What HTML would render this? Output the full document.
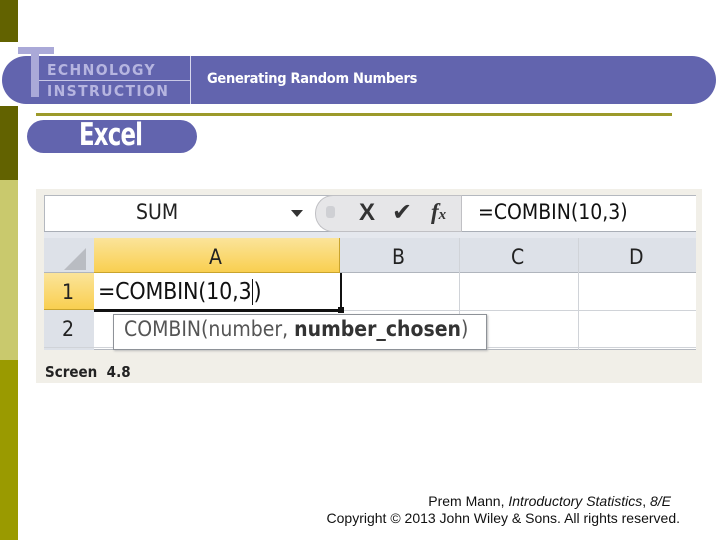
<!DOCTYPE html>
<html><head><meta charset="utf-8"><style>
*{margin:0;padding:0;box-sizing:border-box}
body{width:720px;height:540px;position:relative;background:#fff;overflow:hidden;font-family:"Liberation Sans",sans-serif}
.a{position:absolute}
.cal{font-family:"DejaVu Sans Condensed","DejaVu Sans","Liberation Sans",sans-serif}
</style></head><body>
<div class="a" style="left:0;top:0;width:18px;height:42px;background:#626200"></div>
<div class="a" style="left:0;top:106px;width:18px;height:74px;background:#626200"></div>
<div class="a" style="left:0;top:180px;width:18px;height:180px;background:#c9c96d"></div>
<div class="a" style="left:0;top:360px;width:18px;height:180px;background:#9a9a00"></div>

<div class="a" style="left:2px;top:56px;width:714px;height:48px;background:#6264ae;border-radius:24px"></div>
<div class="a" style="left:18px;top:47px;width:36px;height:7px;background:#aaa9d8"></div>
<div class="a" style="left:31px;top:47px;width:8px;height:50px;background:#aaa9d8"></div>
<div class="a" style="left:39px;top:80px;width:152px;height:1px;background:#c8c8e6"></div>
<div class="a" style="left:190px;top:56px;width:1px;height:48px;background:#d8d8ee"></div>
<div class="a cal" style="left:47px;top:61px;font-size:15.5px;font-weight:bold;letter-spacing:1.4px;color:#b6b5e0">ECHNOLOGY</div>
<div class="a cal" style="left:47px;top:82px;font-size:15.5px;font-weight:bold;letter-spacing:1.4px;color:#b6b5e0">INSTRUCTION</div>
<div class="a cal" style="left:207px;top:71px;font-size:14.5px;font-weight:bold;color:#fff;letter-spacing:-0.3px">Generating Random Numbers</div>

<div class="a" style="left:36px;top:113px;width:636px;height:3px;background:#9c9a2a"></div>
<div class="a" style="left:27px;top:120px;width:170px;height:33px;background:#6264ae;border-radius:17px"></div>
<div class="a cal" style="left:79px;top:117px;font-size:31px;font-weight:bold;color:#fff;letter-spacing:-1px;transform:scaleX(.82);transform-origin:left">Excel</div>

<div class="a" style="left:36px;top:189px;width:666px;height:194px;background:#f1efe8"></div>
<div class="a" style="left:44px;top:195px;width:652px;height:155px;background:#fff;border:1px solid #b4b8bf;border-right:none"></div>
<div class="a" style="left:44px;top:231px;width:652px;height:7px;background:#e5e8ee;border-top:1px solid #a9aeb6"></div>
<div class="a cal" style="left:136px;top:200px;font-size:21px;color:#222">SUM</div>
<div class="a" style="left:291px;top:210px;border-left:6px solid transparent;border-right:6px solid transparent;border-top:7px solid #333"></div>
<div class="a" style="left:315px;top:195px;width:146px;height:37px;background:#e6e6e8;border-radius:18px 0 0 18px;border:1px solid #c0c0c4;border-right:none"></div>
<div class="a" style="left:326px;top:206px;width:9px;height:12px;background:#cfd0d4;border-radius:3px"></div>
<div class="a" style="left:359px;top:199px;font-size:24px;font-weight:bold;color:#333">X</div>
<div class="a" style="left:392px;top:198px;font-size:24px;color:#333">✔</div>
<div class="a" style="left:431px;top:199px;font-family:'Liberation Serif',serif;font-style:italic;font-weight:bold;font-size:23px;color:#333">f<span style="font-size:15px">x</span></div>
<div class="a" style="left:461px;top:195px;width:1px;height:37px;background:#c0c0c4"></div>
<div class="a cal" style="left:478px;top:200px;font-size:21px;color:#111">=COMBIN(10,3)</div>
<div class="a" style="left:44px;top:238px;width:652px;height:35px;background:#dde1e8;border-bottom:1px solid #b0b5bd"></div>
<div class="a" style="left:44px;top:273px;width:50px;height:77px;background:#dde1e8"></div>
<div class="a" style="left:64px;top:248px;width:0;height:0;border-left:22px solid transparent;border-bottom:22px solid #b9bcc2"></div>
<div class="a" style="left:94px;top:238px;width:246px;height:35px;background:linear-gradient(#fbe49a,#f9cf50);border-bottom:1px solid #c9a42d;border-right:1px solid #c9a42d"></div>
<div class="a" style="left:44px;top:273px;width:50px;height:37px;background:linear-gradient(#fbe49a,#f9cf50);border-bottom:1px solid #c9a42d"></div>
<div class="a" style="left:459px;top:238px;width:1px;height:112px;background:#d0d3d8"></div>
<div class="a" style="left:578px;top:238px;width:1px;height:112px;background:#d0d3d8"></div>
<div class="a" style="left:94px;top:310px;width:602px;height:1px;background:#d0d3d8"></div>
<div class="a" style="left:44px;top:347px;width:652px;height:1px;background:#d0d3d8"></div>
<div class="a cal" style="left:209px;top:245px;font-size:21px;color:#222">A</div>
<div class="a cal" style="left:392px;top:245px;font-size:21px;color:#222">B</div>
<div class="a cal" style="left:511px;top:245px;font-size:21px;color:#222">C</div>
<div class="a cal" style="left:629px;top:245px;font-size:21px;color:#222">D</div>
<div class="a cal" style="left:62px;top:280px;font-size:21px;color:#222">1</div>
<div class="a cal" style="left:62px;top:317px;font-size:21px;color:#222">2</div>
<div class="a" style="left:94px;top:273px;width:248px;height:39px;border-right:2px solid #111;border-bottom:3px solid #111"></div>
<div class="a" style="left:338px;top:307px;width:6px;height:6px;background:#111"></div>
<div class="a cal" style="left:98px;top:279px;font-size:23px;color:#111;letter-spacing:-0.2px">=COMBIN(10,3<span style="border-left:1px solid #111;margin-left:1px">)</span></div>
<div class="a cal" style="left:113px;top:314px;width:374px;height:36px;background:#fff;border:1px solid #8e9298;box-shadow:1px 1px 2px #bbb;padding:2px 0 0 10px;font-size:21px;color:#555;white-space:nowrap;letter-spacing:0px">COMBIN(number, <b style="color:#333">number_chosen</b>)</div>
<div class="a cal" style="left:45px;top:363px;font-size:15px;font-weight:bold;color:#222">Screen&nbsp; 4.8</div>

<div class="a" style="left:260px;top:493px;width:411px;text-align:right;font-size:14px;color:#111">Prem Mann, <i>Introductory Statistics</i>, <i>8/E</i></div>
<div class="a" style="left:260px;top:510px;width:420px;text-align:right;font-size:14px;color:#111">Copyright © 2013 John Wiley &amp; Sons. All rights reserved.</div>
</body></html>
